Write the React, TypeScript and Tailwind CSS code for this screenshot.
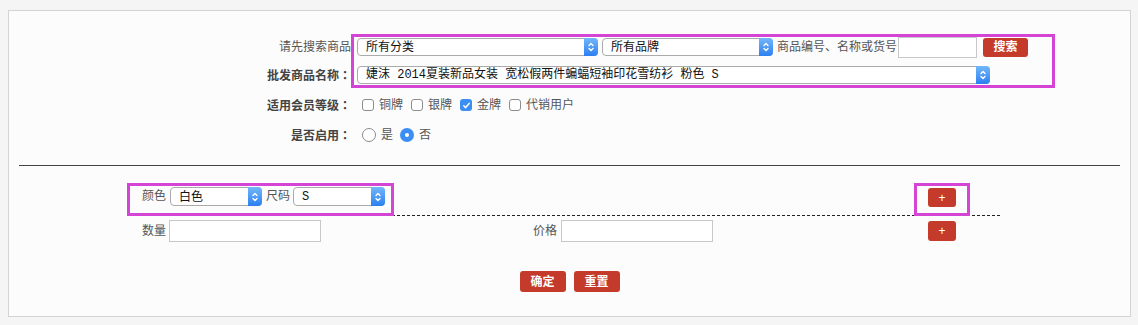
import type { ReactNode } from "react";

const mono = "font-['Liberation_Mono','Noto_Sans_CJK_SC',monospace]";

function Stepper() {
  return (
    <div className="-my-px -mr-px ml-auto flex w-[14px] items-center justify-center rounded-r-[4px] bg-gradient-to-b from-[#72b6fa] to-[#2b7ff0]">
      <svg width="8" height="12" viewBox="0 0 8 12" fill="none" stroke="white" strokeWidth={1.4} strokeLinecap="round" strokeLinejoin="round">
        <path d="M2 4.5L4 2.5L6 4.5" />
        <path d="M2 7.5L4 9.5L6 7.5" />
      </svg>
    </div>
  );
}

function Select({ className, children }: { className: string; children: ReactNode }) {
  return (
    <div className={`flex items-stretch rounded-[4px] border border-[#ababab] bg-white text-[12px] text-[#111] ${className}`}>
      <span className="flex items-center pl-[8px] leading-none">{children}</span>
      <Stepper />
    </div>
  );
}

function RedButton({ className, children }: { className: string; children: ReactNode }) {
  return (
    <button className={`flex items-center justify-center rounded-[3px] bg-[#c43a2b] text-[12px] font-bold text-white ${className}`}>
      {children}
    </button>
  );
}

function Checkbox({ checked, label }: { checked?: boolean; label: string }) {
  return (
    <div className="flex items-center">
      {checked ? (
        <span className="flex h-[12px] w-[12px] items-center justify-center rounded-[3px] bg-[#3a8ef4]">
          <svg width="9" height="9" viewBox="0 0 9 9" fill="none" stroke="white" strokeWidth={1.5} strokeLinecap="round" strokeLinejoin="round">
            <path d="M1.8 4.8L3.6 6.6L7.2 2.4" />
          </svg>
        </span>
      ) : (
        <span className="h-[12px] w-[12px] rounded-[3px] border border-[#8c8c8c] bg-white" />
      )}
      <span className="ml-[5px] text-[12px] text-[#555]">{label}</span>
    </div>
  );
}

function Radio({ checked, label }: { checked?: boolean; label: string }) {
  return (
    <div className="flex items-center">
      {checked ? (
        <span className="flex h-[14px] w-[14px] items-center justify-center rounded-full bg-[#3a8ef4]">
          <span className="h-[4px] w-[4px] rounded-full bg-white" />
        </span>
      ) : (
        <span className="h-[14px] w-[14px] rounded-full border border-[#8c8c8c] bg-white" />
      )}
      <span className="ml-[5px] text-[12px] text-[#555]">{label}</span>
    </div>
  );
}

// full-width colon, left-aligned in its cell like the reference
function Colon() {
  return <span className="font-['Noto_Sans_CJK_JP',sans-serif]">：</span>;
}

export default function App() {
  return (
    <div className="h-[325px] w-[1138px] bg-[#f5f5f5] pl-[8px] pt-[10px] font-['Liberation_Sans','Noto_Sans_CJK_SC',sans-serif]">
      <div className="flex h-[307px] w-[1123px] flex-col border border-[#d4d4d4] bg-[#fcfcfc]">
        {/* search + product */}
        <div className="mt-[23px] flex">
          <div className="flex w-[342px] flex-col pt-[3px] text-right text-[12px]">
            <div className="h-[20px] leading-[20px] text-[#555]">请先搜索商品</div>
            <div className="mt-[9px] h-[18px] font-bold leading-[18px] text-[#444]">
              批发商品名称<Colon />
            </div>
          </div>
          <div className="h-[54px] w-[704px] border-[3px] border-[#d545d5] pl-[3px]">
            <div className="flex h-[20px] items-center">
              <Select className="h-[18px] w-[241px]">所有分类</Select>
              <Select className="ml-[4px] h-[18px] w-[171px]">所有品牌</Select>
              <span className="ml-[4px] text-[12px] text-[#555]">商品编号、名称或货号</span>
              <input className="ml-[1px] h-[21px] w-[79px] border border-[#c8c8c8] bg-white outline-none" />
              <RedButton className="ml-[6px] h-[19px] w-[45px]">搜索</RedButton>
            </div>
            <div className="mt-[9px] flex">
              <Select className="h-[18px] w-[633px]">
                <span className={mono}>婕沫 2014夏装新品女装 宽松假两件蝙蝠短袖印花雪纺衫 粉色 S</span>
              </Select>
            </div>
          </div>
        </div>

        {/* member level */}
        <div className="mt-[8px] flex h-[18px] items-center">
          <div className="w-[342px] text-right text-[12px] font-bold text-[#444]">
            适用会员等级<Colon />
          </div>
          <div className="ml-[11px] flex items-center gap-[8px]">
            <Checkbox label="铜牌" />
            <Checkbox label="银牌" />
            <Checkbox checked label="金牌" />
            <Checkbox label="代销用户" />
          </div>
        </div>

        {/* enabled */}
        <div className="mt-[12px] flex h-[18px] items-center">
          <div className="w-[342px] text-right text-[12px] font-bold text-[#444]">
            是否启用<Colon />
          </div>
          <div className="ml-[11px] flex items-center gap-[7px]">
            <Radio label="是" />
            <Radio checked label="否" />
          </div>
        </div>

        <div className="mx-[10px] mt-[21px] h-px bg-[#444]" />

        {/* variants */}
        <div className="ml-[118px] mt-[17px] w-[873px]">
          <div className="flex h-[33px] items-start border-b border-dashed border-[#222]">
            <div className="flex h-[33px] w-[267px] shrink-0 items-start border-[3px] border-[#d545d5] pl-[12px] pt-[1px] text-[12px] text-[#555]">
              <span className="h-[19px] leading-[19px]">颜色</span>
              <Select className="ml-[4px] h-[19px] w-[92px]">白色</Select>
              <span className="ml-[4px] h-[19px] leading-[19px]">尺码</span>
              <Select className="ml-[3px] h-[19px] w-[92px]">
                <span className={mono}>S</span>
              </Select>
            </div>
            <div className="ml-[520px] h-[33px] w-[56px] shrink-0 border-[3px] border-[#d545d5] pl-[11px] pt-[2px]">
              <RedButton className="h-[19px] w-[28px] font-normal">+</RedButton>
            </div>
          </div>
          <div className="mt-[4px] flex h-[22px] items-center pl-[15px] text-[12px] text-[#555]">
            <div className="flex w-[391px] items-center">
              <span>数量</span>
              <input className="ml-[3px] h-[22px] w-[152px] border border-[#c8c8c8] bg-white outline-none" />
            </div>
            <div className="flex w-[395px] items-center">
              <span>价格</span>
              <input className="ml-[4px] h-[22px] w-[152px] border border-[#c8c8c8] bg-white outline-none" />
            </div>
            <RedButton className="h-[20px] w-[28px] font-normal">+</RedButton>
          </div>
        </div>

        <div className="mt-[29px] flex justify-center gap-[8px]">
          <RedButton className="h-[21px] w-[46px]">确定</RedButton>
          <RedButton className="h-[21px] w-[46px]">重置</RedButton>
        </div>
      </div>
    </div>
  );
}
